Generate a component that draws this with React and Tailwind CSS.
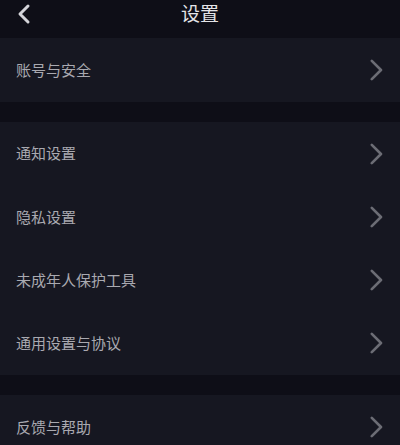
const font = { fontFamily: '"Noto Sans CJK SC", "Noto Sans", sans-serif' };

function Chevron() {
  return (
    <svg width="14" height="22" viewBox="0 0 14 22" className="mr-4">
      <path d="M1.8 1.8 L11 11 L1.8 20.2" fill="none" stroke="#6c6d75" strokeWidth="2.6" strokeLinecap="round" strokeLinejoin="round" />
    </svg>
  );
}

function Row({ label, h = 'h-[63.25px]' }) {
  return (
    <div className={`flex items-center justify-between ${h} bg-[#161721]`}>
      <span className="pl-4 text-[15px] text-[#a9a9b0]">{label}</span>
      <Chevron />
    </div>
  );
}

export default function App() {
  return (
    <div className="w-[400px] h-[445px] overflow-hidden bg-[#0e0e17]" style={font}>
      {/* Header */}
      <div className="relative flex items-center justify-center h-[38px] bg-[#0e0e17]">
        <svg width="16" height="22" viewBox="0 0 16 22" className="absolute left-[15px] top-[3px]">
          <path d="M13 3 L5 11 L13 19" fill="none" stroke="#d4d4d9" strokeWidth="3" strokeLinecap="round" strokeLinejoin="round" />
        </svg>
        <span className="text-[19px] text-[#e4e4e8] -mt-3">设置</span>
      </div>

      <Row label="账号与安全" h="h-[64px]" />

      <div className="h-5" />

      <div className="flex flex-col">
        <Row label="通知设置" />
        <Row label="隐私设置" />
        <Row label="未成年人保护工具" />
        <Row label="通用设置与协议" />
      </div>

      <div className="h-5" />

      <Row label="反馈与帮助" h="h-[64px]" />
    </div>
  );
}
